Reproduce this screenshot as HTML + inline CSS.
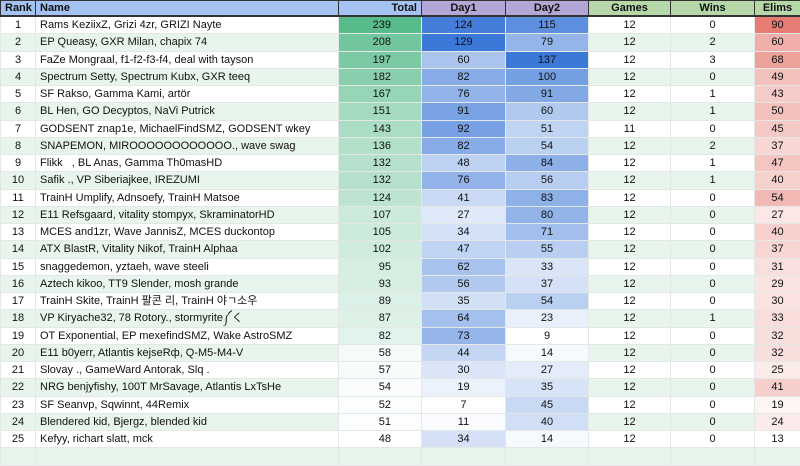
<!DOCTYPE html>
<html><head><meta charset="utf-8"><style>
body{margin:0;width:800px;height:450px;overflow:hidden;background:#fff;font-family:"Liberation Sans","Noto Sans CJK KR",sans-serif;font-size:11px;color:#111}
table{border-collapse:collapse;table-layout:fixed;width:800px}
td,th{height:16.25px;padding:0 4px;border:1px solid #e3e8e6;white-space:nowrap;overflow:hidden;line-height:16px}
th{height:14px;line-height:14px;font-weight:bold;border:1px solid #333;border-bottom:2px solid #333}
.b{background:#a4c2f4}.p{background:#b4a7d6}.g{background:#b6d7a8}
td{text-align:center}td.n{text-align:left}td.r{text-align:right;padding-right:30px}
tr:nth-child(odd) td{background:#e8f5ec}
</style></head><body>
<table id="t">
<colgroup><col style="width:35px"><col style="width:303px"><col style="width:83px"><col style="width:84px"><col style="width:83px"><col style="width:82px"><col style="width:84px"><col style="width:46px"></colgroup>
<tr><th class="b">Rank</th><th class="b" style="text-align:left">Name</th><th class="b" style="text-align:right">Total</th><th class="p">Day1</th><th class="p">Day2</th><th class="g">Games</th><th class="g">Wins</th><th class="g">Elims</th></tr>
<tr><td>1</td><td class="n">Rams KeziixZ, Grizi 4zr, GRIZI Nayte</td><td class="r">239</td><td>124</td><td>115</td><td>12</td><td>0</td><td>90</td></tr>
<tr><td>2</td><td class="n">EP Queasy, GXR Milan, chapix 74</td><td class="r">208</td><td>129</td><td>79</td><td>12</td><td>2</td><td>60</td></tr>
<tr><td>3</td><td class="n">FaZe Mongraal, f1-f2-f3-f4, deal with tayson</td><td class="r">197</td><td>60</td><td>137</td><td>12</td><td>3</td><td>68</td></tr>
<tr><td>4</td><td class="n">Spectrum Setty, Spectrum Kubx, GXR teeq</td><td class="r">182</td><td>82</td><td>100</td><td>12</td><td>0</td><td>49</td></tr>
<tr><td>5</td><td class="n">SF Rakso, Gamma Kami, artör</td><td class="r">167</td><td>76</td><td>91</td><td>12</td><td>1</td><td>43</td></tr>
<tr><td>6</td><td class="n">BL Hen, GO Decyptos, NaVi Putrick</td><td class="r">151</td><td>91</td><td>60</td><td>12</td><td>1</td><td>50</td></tr>
<tr><td>7</td><td class="n">GODSENT znap1e, MichaelFindSMZ, GODSENT wkey</td><td class="r">143</td><td>92</td><td>51</td><td>11</td><td>0</td><td>45</td></tr>
<tr><td>8</td><td class="n">SNAPEMON, MIROOOOOOOOOOOO., wave swag</td><td class="r">136</td><td>82</td><td>54</td><td>12</td><td>2</td><td>37</td></tr>
<tr><td>9</td><td class="n">Flikk &nbsp;&nbsp;, BL Anas, Gamma Th0masHD</td><td class="r">132</td><td>48</td><td>84</td><td>12</td><td>1</td><td>47</td></tr>
<tr><td>10</td><td class="n">Safik ., VP Siberiajkee, IREZUMI</td><td class="r">132</td><td>76</td><td>56</td><td>12</td><td>1</td><td>40</td></tr>
<tr><td>11</td><td class="n">TrainH Umplify, Adnsoefy, TrainH Matsoe</td><td class="r">124</td><td>41</td><td>83</td><td>12</td><td>0</td><td>54</td></tr>
<tr><td>12</td><td class="n">E11 Refsgaard, vitality stompyx, SkraminatorHD</td><td class="r">107</td><td>27</td><td>80</td><td>12</td><td>0</td><td>27</td></tr>
<tr><td>13</td><td class="n">MCES and1zr, Wave JannisZ, MCES duckontop</td><td class="r">105</td><td>34</td><td>71</td><td>12</td><td>0</td><td>40</td></tr>
<tr><td>14</td><td class="n">ATX BlastR, Vitality Nikof, TrainH Alphaa</td><td class="r">102</td><td>47</td><td>55</td><td>12</td><td>0</td><td>37</td></tr>
<tr><td>15</td><td class="n">snaggedemon, yztaeh, wave steeli</td><td class="r">95</td><td>62</td><td>33</td><td>12</td><td>0</td><td>31</td></tr>
<tr><td>16</td><td class="n">Aztech kikoo, TT9 Slender, mosh grande</td><td class="r">93</td><td>56</td><td>37</td><td>12</td><td>0</td><td>29</td></tr>
<tr><td>17</td><td class="n">TrainH Skite, TrainH 팔콘 리, TrainH 야ㄱ소우</td><td class="r">89</td><td>35</td><td>54</td><td>12</td><td>0</td><td>30</td></tr>
<tr><td>18</td><td class="n">VP Kiryache32, 78 Rotory., stormyrite༼く</td><td class="r">87</td><td>64</td><td>23</td><td>12</td><td>1</td><td>33</td></tr>
<tr><td>19</td><td class="n">OT Exponential, EP mexefindSMZ, Wake AstroSMZ</td><td class="r">82</td><td>73</td><td>9</td><td>12</td><td>0</td><td>32</td></tr>
<tr><td>20</td><td class="n">E11 b0yerr, Atlantis kejseRф, Q-M5-M4-V</td><td class="r">58</td><td>44</td><td>14</td><td>12</td><td>0</td><td>32</td></tr>
<tr><td>21</td><td class="n">Slovay ., GameWard Antorak, Slq .</td><td class="r">57</td><td>30</td><td>27</td><td>12</td><td>0</td><td>25</td></tr>
<tr><td>22</td><td class="n">NRG benjyfishy, 100T MrSavage, Atlantis LxTsHe</td><td class="r">54</td><td>19</td><td>35</td><td>12</td><td>0</td><td>41</td></tr>
<tr><td>23</td><td class="n">SF Seanvp, Sqwinnt, 44Remix</td><td class="r">52</td><td>7</td><td>45</td><td>12</td><td>0</td><td>19</td></tr>
<tr><td>24</td><td class="n">Blendered kid, Bjergz, blended kid</td><td class="r">51</td><td>11</td><td>40</td><td>12</td><td>0</td><td>24</td></tr>
<tr><td>25</td><td class="n">Kefyy, richart slatt, mck</td><td class="r">48</td><td>34</td><td>14</td><td>12</td><td>0</td><td>13</td></tr>
<tr><td>&nbsp;</td><td class="n"></td><td></td><td></td><td></td><td></td><td></td><td></td></tr>
</table>
<script>
var rows=document.querySelectorAll('#t tr');
var spec={2:[48,239,[87,187,138]],3:[7,129,[60,120,216]],4:[9,137,[60,120,216]],7:[13,90,[230,124,115]]};
for(var i=1;i<=25;i++){var c=rows[i].children;for(var k in spec){var s=spec[k];var v=+c[k].textContent;var f=(v-s[0])/(s[1]-s[0]);var col=s[2].map(function(x){return Math.round(255+(x-255)*f)});c[k].style.background='rgb('+col.join(',')+')';}}
</script>
</body></html>
